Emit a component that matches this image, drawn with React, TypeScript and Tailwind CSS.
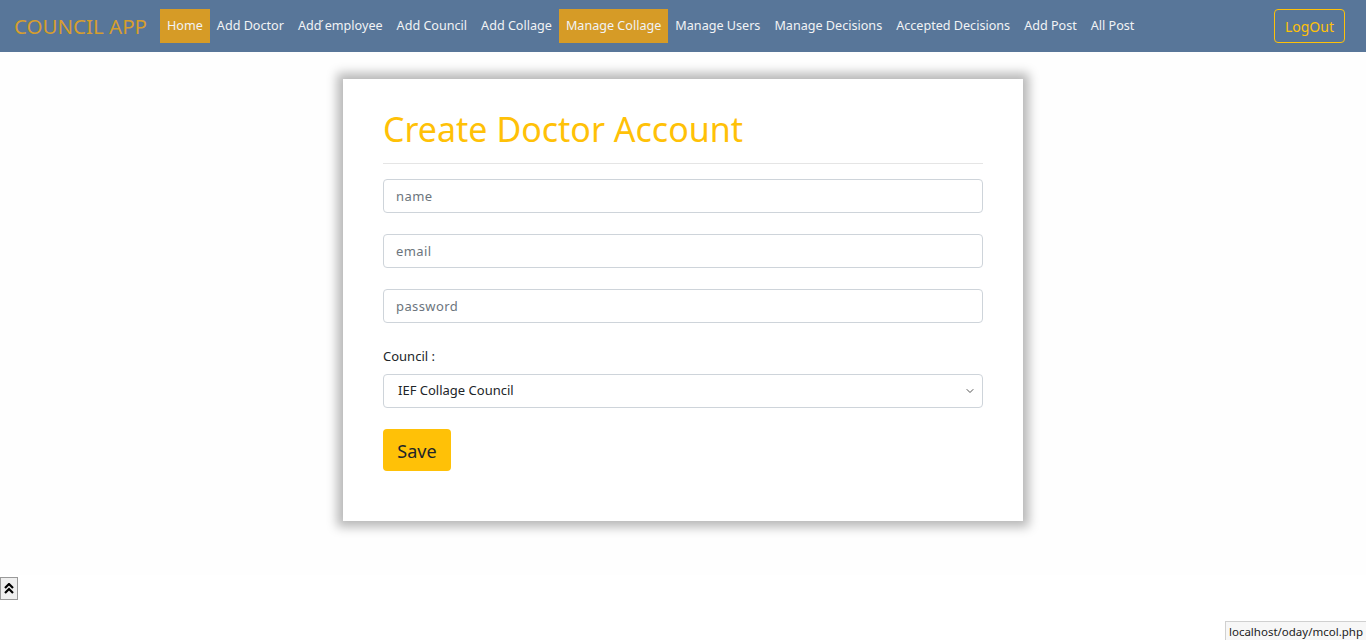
import { ChevronDown } from "lucide-react";

const links = [
  { label: "Home", active: true },
  { label: "Add Doctor" },
  { label: "Add \u0301employee" },
  { label: "Add Council" },
  { label: "Add Collage" },
  { label: "Manage Collage", active: true },
  { label: "Manage Users" },
  { label: "Manage Decisions" },
  { label: "Accepted Decisions" },
  { label: "Add Post" },
  { label: "All Post" },
];

const font = { fontFamily: '"Segoe UI", "Noto Sans", sans-serif' };

const Field = ({ placeholder }: { placeholder: string }) => (
  <input
    placeholder={placeholder}
    className="mb-[21px] h-[34px] w-full rounded border border-[#ced4da] bg-white px-3 text-[13px] tracking-[0.4px] text-[#495057] placeholder:text-[#6c757d] outline-none"
  />
);

export default function App() {
  return (
    <div className="relative min-h-[640px] bg-white" style={font}>
      <nav className="flex h-[52px] items-center bg-[#587699] pl-[14px] pr-[21px]">
        <span className="mr-[13px] text-[20.5px] text-[#d69e2e]">COUNCIL APP</span>
        <ul className="flex items-center">
          {links.map((l) => (
            <li
              key={l.label}
              className={
                "flex h-[34px] items-center px-[7px] text-[12.6px] text-[#f1f3f5] " +
                (l.active ? "bg-[#d69b26]" : "")
              }
            >
              {l.label}
            </li>
          ))}
        </ul>
        <button className="ml-auto h-[34px] rounded border border-[#ffc107] px-[10px] text-[14px] text-[#ffc107]">
          LogOut
        </button>
      </nav>

      <div className="flex h-[523px] justify-center bg-[#fefefe] pt-[27px]">
        <div className="h-[442px] w-[680px] bg-white px-10 pt-[28px] shadow-[0_0_10px_6px_rgba(0,0,0,0.28)]">
          <h1 className="text-[34px] leading-[44px] text-[#ffc107]">Create Doctor Account</h1>
          <hr className="mt-[12px] mb-[15px] border-[#e5e5e5]" />
          <Field placeholder="name" />
          <Field placeholder="email" />
          <Field placeholder="password" />
          <label className="mt-[3px] mb-[7px] block text-[13px] text-[#212529]">Council :</label>
          <div className="relative mb-[21px] flex h-[34px] items-center rounded border border-[#ced4da] px-[14px] text-[13px] text-[#212529]">
            IEF Collage Council
            <ChevronDown className="absolute right-[6px] h-3 w-3 text-[#555]" />
          </div>
          <button className="h-[42px] w-[68px] rounded bg-[#ffc107] pt-[3px] text-[18px] text-[#212529]">Save</button>
        </div>
      </div>

      <button className="absolute left-0 top-[577px] flex h-[23px] w-[18px] items-center justify-center border border-[#999] bg-[#efefef]">
        <svg width="10" height="12" viewBox="0 0 10 12">
          <path d="M1 5 L5 1 L9 5 M1 10 L5 6 L9 10" stroke="#000" strokeWidth="2.2" fill="none" />
        </svg>
      </button>

      <div className="absolute bottom-0 right-0 border-t border-l border-[#d0d0d0] bg-[#f7f7f7] px-[3px] pt-[1px] text-[11.5px] text-[#222]">
        localhost/oday/mcol.php
      </div>
    </div>
  );
}
